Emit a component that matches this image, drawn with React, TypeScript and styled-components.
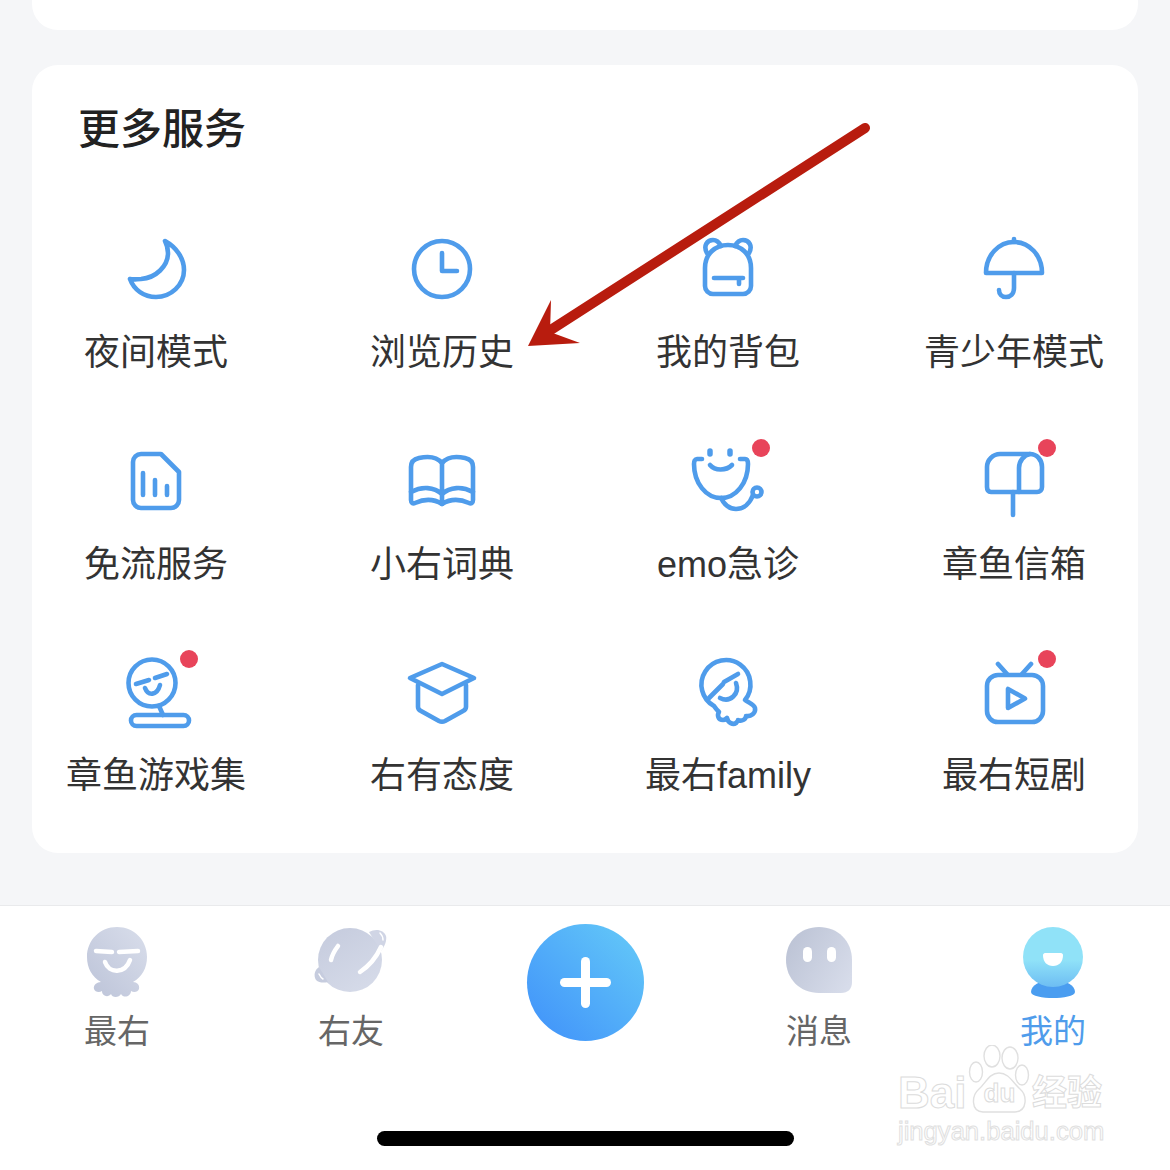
import React from 'react';
import styled, { createGlobalStyle } from 'styled-components';

const GlobalStyle = createGlobalStyle`
  html, body {
    margin: 0;
    padding: 0;
    background: #f5f6f8;
    font-family: "Liberation Sans", "Noto Sans CJK SC", sans-serif;
  }
`;

const services = [
  {
    label: '夜间模式',
    icon: <path d="M49 13C60 19 68 30 68 42C68 57 55 69 40 69C28 69 18 62 14 51C17 52 21 51 25 51C40 50 52 38 52 25C52 21 51 17 49 13Z" />,
  },
  {
    label: '浏览历史',
    icon: (
      <>
        <circle cx="40" cy="41" r="28" />
        <path d="M40 25V43H55" />
      </>
    ),
  },
  {
    label: '我的背包',
    icon: (
      <>
        <path d="M17 40C17 26 27 17 40 17C53 17 63 26 63 40V58A8 8 0 0 1 55 66H25A8 8 0 0 1 17 58Z" />
        <path d="M19 25C15 18 19 12 25 12C28 12 31 14 33 18" />
        <path d="M61 25C65 18 61 12 55 12C52 12 49 14 47 18" />
        <path d="M26 50H55" />
        <path d="M51 51V56" />
      </>
    ),
  },
  {
    label: '青少年模式',
    icon: (
      <>
        <path d="M12 45C12 27 25 14 40 14C55 14 68 27 68 45Z" />
        <path d="M40 11V14" />
        <path d="M40 45V60C40 66 36 69 32 69C28 69 25 66 25 62" />
      </>
    ),
  },
  {
    label: '免流服务',
    icon: (
      <>
        <path d="M25 14H45L63 32V60A8 8 0 0 1 55 68H25A8 8 0 0 1 17 60V22A8 8 0 0 1 25 14Z" />
        <path d="M27 33V55M39 40V55M51 46V55" />
      </>
    ),
  },
  {
    label: '小右词典',
    icon: (
      <>
        <path d="M40 23C35 17 26 16 17 18C12 19 9 22 9 27V60C9 63 11 64 13 63C22 59 32 59 40 64C48 59 58 59 67 63C69 64 71 63 71 60V27C71 22 68 19 63 18C54 16 45 17 40 23Z" />
        <path d="M40 23V64" />
        <path d="M9 52C20 46 32 47 40 54C48 47 60 46 71 52" />
      </>
    ),
  },
  {
    label: 'emo急诊',
    badge: true,
    icon: (
      <>
        <path d="M22 11V14M42 11V14" strokeWidth={5.5} />
        <path d="M22 25C27 31 38 31 44 25" />
        <path d="M14 19H9C7 19 6 21 6 24C6 43 18 58 33 58C48 58 60 43 60 24C60 21 59 19 57 19H52" />
        <path d="M33 58C37 66 42 69 48 69C56 69 62 63 65 55" />
        <circle cx="69" cy="52" r="4.5" />
      </>
    ),
  },
  {
    label: '章鱼信箱',
    badge: true,
    icon: (
      <>
        <path d="M26 14H56C63 14 68 20 68 27V47C68 50 66 52 63 52H17C14 52 13 50 13 47V27C13 20 19 14 26 14Z" />
        <path d="M45 52V28C45 21 50 15 56 14" />
        <path d="M39 52V75" />
      </>
    ),
  },
  {
    label: '章鱼游戏集',
    badge: true,
    icon: (
      <>
        <circle cx="36" cy="32" r="23.5" />
        <path d="M20 33L33 29M39 27L51 23" />
        <path d="M29 37C32 45 41 45 44 34" />
        <path d="M43 55L47 64" />
        <rect x="15" y="64" width="58" height="11" rx="5.5" />
      </>
    ),
  },
  {
    label: '右有态度',
    icon: (
      <>
        <path d="M40 13L72 27L40 43L8 27Z" />
        <path d="M16 34V56C16 58 17 59 19 60L37 70C39 71 41 71 43 70L61 60C63 59 64 58 64 56V34" />
      </>
    ),
  },
  {
    label: '最右family',
    icon: (
      <g transform="translate(-2 0)">
        <path d="M59 49A24.5 24.5 0 1 0 28 55C30 58 32 60 33 61C31 64 32 69 37 69C39 69 40 68 41 67C42 72 47 74 50 72C51 71 52 70 52 69C56 71 60 68 60 65C65 66 70 62 69 57C68 53 63 52 59 49Z" />
        <path d="M23 47L37 33M38 31L52 23" />
        <path d="M34 47C44 52 54 43 50 32" />
      </g>
    ),
  },
  {
    label: '最右短剧',
    badge: true,
    icon: (
      <>
        <rect x="13" y="24" width="56" height="47" rx="11" />
        <path d="M24 13L33 23M57 13L48 23" />
        <path d="M34 38V57L51 47.5Z" />
      </>
    ),
  },
];

const tabs = [
  {
    label: '最右',
    icon: (
      <>
        <defs>
          <linearGradient id="tabOctopus" x1="1" y1="0" x2="0" y2="1">
            <stop offset="0" stopColor="#d9deeb" />
            <stop offset="1" stopColor="#bcc3d8" />
          </linearGradient>
        </defs>
        <path
          fill="url(#tabOctopus)"
          d="M10 37C10 20 23 7 40 7C57 7 70 20 70 37C70 48 65 57 56 62C60 62 63 65 62 69C61 72 57 73 54 71C54 76 47 79 44 74C42 78 35 78 34 74C31 78 25 76 25 71C22 73 18 72 17 69C16 65 20 62 24 62C15 57 10 48 10 37Z"
        />
        <path d="M19 31L35 32M42 32L61 31" fill="none" stroke="#fff" strokeWidth={4.5} strokeLinecap="round" />
        <path d="M28 42C32 54 48 54 53 40" fill="none" stroke="#fff" strokeWidth={4.5} strokeLinecap="round" />
      </>
    ),
  },
  {
    label: '右友',
    icon: (
      <>
        <defs>
          <linearGradient id="tabPlanet" x1="0.2" y1="0" x2="0.8" y2="1">
            <stop offset="0" stopColor="#c6ccde" />
            <stop offset="1" stopColor="#d6dbe9" />
          </linearGradient>
        </defs>
        <circle cx="39" cy="40" r="32" fill="url(#tabPlanet)" />
        <path fill="#d0d5e5" d="M58 12C65 8 73 10 75 16C76 20 74 26 70 31Z" />
        <path fill="#c6ccde" d="M8 47C4 50 2 55 5 60C8 63 13 63 17 62Z" />
        <path d="M27 26C24 30 21 35 20 40" fill="none" stroke="#fff" strokeWidth={4.5} strokeLinecap="round" />
        <path d="M70 27C65 38 58 46 49 52" fill="none" stroke="#fff" strokeWidth={4.5} strokeLinecap="round" />
        <path d="M69 13C71 15 72 17 72 20" fill="none" stroke="#fff" strokeWidth={1.5} strokeLinecap="round" />
        <path d="M8 54C9 56 10 58 12 59" fill="none" stroke="#fff" strokeWidth={1.5} strokeLinecap="round" />
      </>
    ),
  },
  null,
  {
    label: '消息',
    icon: (
      <>
        <defs>
          <linearGradient id="tabGhost" x1="0" y1="0.2" x2="1" y2="0.8">
            <stop offset="0" stopColor="#bcc3d5" />
            <stop offset="1" stopColor="#d7dcea" />
          </linearGradient>
        </defs>
        <path fill="url(#tabGhost)" d="M7 40C7 21 21 7 40 7C59 7 73 21 73 40V62C73 69 69 73 62 73H40C21 73 7 59 7 40Z" />
        <rect x="24" y="27" width="9" height="15" rx="4.5" fill="#fff" />
        <rect x="48" y="27" width="9" height="15" rx="4.5" fill="#fff" />
      </>
    ),
  },
  {
    label: '我的',
    active: true,
    icon: (
      <>
        <defs>
          <linearGradient id="tabGlobe" x1="0.5" y1="0.55" x2="0.5" y2="1">
            <stop offset="0" stopColor="#90e2f8" />
            <stop offset="1" stopColor="#6dbdf3" />
          </linearGradient>
        </defs>
        <path fill="#4a9df0" d="M18 72C18 66 26 60 40 60C54 60 62 66 62 72C62 76 50 78 40 78C30 78 18 76 18 72Z" />
        <circle cx="40" cy="37" r="30" fill="url(#tabGlobe)" />
        <path fill="#fff" d="M30 35C30 34 31 33 32 33H48C49 33 50 34 50 35C50 42 46 46 40 46C34 46 30 42 30 35Z" />
      </>
    ),
  },
];

const App: React.FC = () => {
  return (
    <Page>
      <GlobalStyle />
      <TopCardEnd />
      <Card>
        <Title>更多服务</Title>
        <ServiceGrid>
          {services.map((item) => (
            <Service key={item.label}>
              <IconWrap>
                <LineIcon viewBox="0 0 80 80">{item.icon}</LineIcon>
                {item.badge && <Badge />}
              </IconWrap>
              <ServiceLabel>{item.label}</ServiceLabel>
            </Service>
          ))}
        </ServiceGrid>
      </Card>
      <TabBar>
        {tabs.map((tab, i) =>
          tab ? (
            <Tab key={tab.label}>
              <TabIcon viewBox="0 0 80 80">{tab.icon}</TabIcon>
              <TabLabel $active={tab.active}>{tab.label}</TabLabel>
            </Tab>
          ) : (
            <Tab key={i}>
              <PlusButton>
                <PlusH />
                <PlusV />
              </PlusButton>
            </Tab>
          ),
        )}
      </TabBar>
      <HomeBar />

      <Arrow viewBox="0 0 400 260">
        <path d="M355 18L36 223" fill="none" stroke="#b81c0e" strokeWidth={10} strokeLinecap="round" />
        <path d="M18 236L41 190L40 222L70 233Z" fill="#b81c0e" />
      </Arrow>

      <Watermark>
        <Paw viewBox="0 0 65 70">
          <ellipse cx="25" cy="11" rx="8" ry="11" />
          <ellipse cx="43" cy="13" rx="8" ry="11" />
          <ellipse cx="9" cy="27" rx="6.5" ry="10" />
          <ellipse cx="55" cy="30" rx="6.5" ry="10" />
          <path d="M32 28C22 28 19 38 12 44C5 50 3 66 16 67H48C61 66 60 50 53 44C46 38 42 28 32 28Z" />
        </Paw>
        <WatermarkRow>
          <WatermarkBig>Bai</WatermarkBig>
          <WatermarkDu>du</WatermarkDu>
          <WatermarkCn>经验</WatermarkCn>
        </WatermarkRow>
        <WatermarkUrl>jingyan.baidu.com</WatermarkUrl>
      </Watermark>
    </Page>
  );
};

export default App;

const Page = styled.div`
  position: relative;
  width: 1170px;
  height: 1170px;
  overflow: hidden;
  background: #f5f6f8;
`;

const TopCardEnd = styled.div`
  height: 30px;
  margin: 0 32px;
  background: #fff;
  border-radius: 0 0 26px 26px;
`;

const Card = styled.section`
  box-sizing: border-box;
  height: 788px;
  margin: 35px 32px 52px;
  padding: 42px 24px 0;
  background: #fff;
  border-radius: 26px;
`;

const Title = styled.h2`
  margin: 0 0 75px 22px;
  font-size: 42px;
  line-height: 46px;
  font-weight: 500;
  color: #222;
`;

const ServiceGrid = styled.div`
  display: grid;
  grid-template-columns: repeat(4, 200px);
  justify-content: space-between;
  row-gap: 61.5px;
`;

const Service = styled.div`
  display: flex;
  flex-direction: column;
  align-items: center;
`;

const IconWrap = styled.div`
  position: relative;
  width: 80px;
  height: 80px;
`;

const LineIcon = styled.svg`
  display: block;
  width: 80px;
  height: 80px;
  fill: none;
  stroke: #4f9ceb;
  stroke-width: 4.6;
  stroke-linecap: round;
  stroke-linejoin: round;
`;

const Badge = styled.span`
  position: absolute;
  top: -1px;
  left: 64px;
  width: 18px;
  height: 18px;
  border-radius: 50%;
  background: #e8445a;
`;

const ServiceLabel = styled.div`
  margin-top: 20px;
  font-size: 36px;
  line-height: 50px;
  color: #333;
  white-space: nowrap;
`;

const TabBar = styled.nav`
  display: grid;
  grid-template-columns: repeat(5, 234px);
  box-sizing: border-box;
  height: 265px;
  padding-top: 14px;
  background: #fff;
  border-top: 1px solid #e9eaec;
`;

const Tab = styled.div`
  display: flex;
  flex-direction: column;
  align-items: center;
`;

const TabIcon = styled.svg`
  display: block;
  width: 80px;
  height: 80px;
`;

const TabLabel = styled.div<{ $active?: boolean }>`
  margin-top: 10px;
  font-size: 33px;
  line-height: 44px;
  color: ${(p) => (p.$active ? '#4f9ceb' : '#666')};
`;

const PlusButton = styled.div`
  position: relative;
  width: 117px;
  height: 117px;
  margin-top: 4px;
  border-radius: 50%;
  background: linear-gradient(45deg, #3f90fa 0%, #65cbf8 100%);
`;

const PlusH = styled.span`
  position: absolute;
  left: 33px;
  top: 54px;
  width: 51px;
  height: 9px;
  border-radius: 5px;
  background: #fff;
`;

const PlusV = styled.span`
  position: absolute;
  left: 54px;
  top: 33px;
  width: 9px;
  height: 51px;
  border-radius: 5px;
  background: #fff;
`;

const HomeBar = styled.div`
  position: absolute;
  left: 377px;
  top: 1131px;
  width: 417px;
  height: 15px;
  border-radius: 8px;
  background: #000;
`;

const Arrow = styled.svg`
  position: absolute;
  left: 510px;
  top: 110px;
  width: 400px;
  height: 260px;
`;

const Watermark = styled.div`
  position: absolute;
  left: 897px;
  top: 1044px;
  width: 215px;
  height: 105px;
  color: #fff;
`;

const Paw = styled.svg`
  position: absolute;
  left: 70px;
  top: 1px;
  width: 65px;
  height: 70px;
  fill: #fff;
  stroke: #e0e0e0;
  stroke-width: 1.4;
`;

const WatermarkRow = styled.div`
  position: absolute;
  left: 1px;
  top: 25px;
  display: flex;
  align-items: center;
`;

const WatermarkBig = styled.span`
  width: 69px;
  font-size: 44px;
  line-height: 48px;
  font-weight: 700;
  -webkit-text-stroke: 1px #dcdcdc;
`;

const WatermarkDu = styled.span`
  width: 65px;
  text-align: center;
  font-size: 26px;
  line-height: 48px;
  font-weight: 700;
  -webkit-text-stroke: 1px #dcdcdc;
`;

const WatermarkCn = styled.span`
  font-size: 35px;
  line-height: 48px;
  font-weight: 700;
  -webkit-text-stroke: 1px #dcdcdc;
`;

const WatermarkUrl = styled.div`
  position: absolute;
  left: 1px;
  top: 73px;
  font-size: 25.6px;
  line-height: 28px;
  -webkit-text-stroke: 1px #e0e0e0;
  white-space: nowrap;
`;
